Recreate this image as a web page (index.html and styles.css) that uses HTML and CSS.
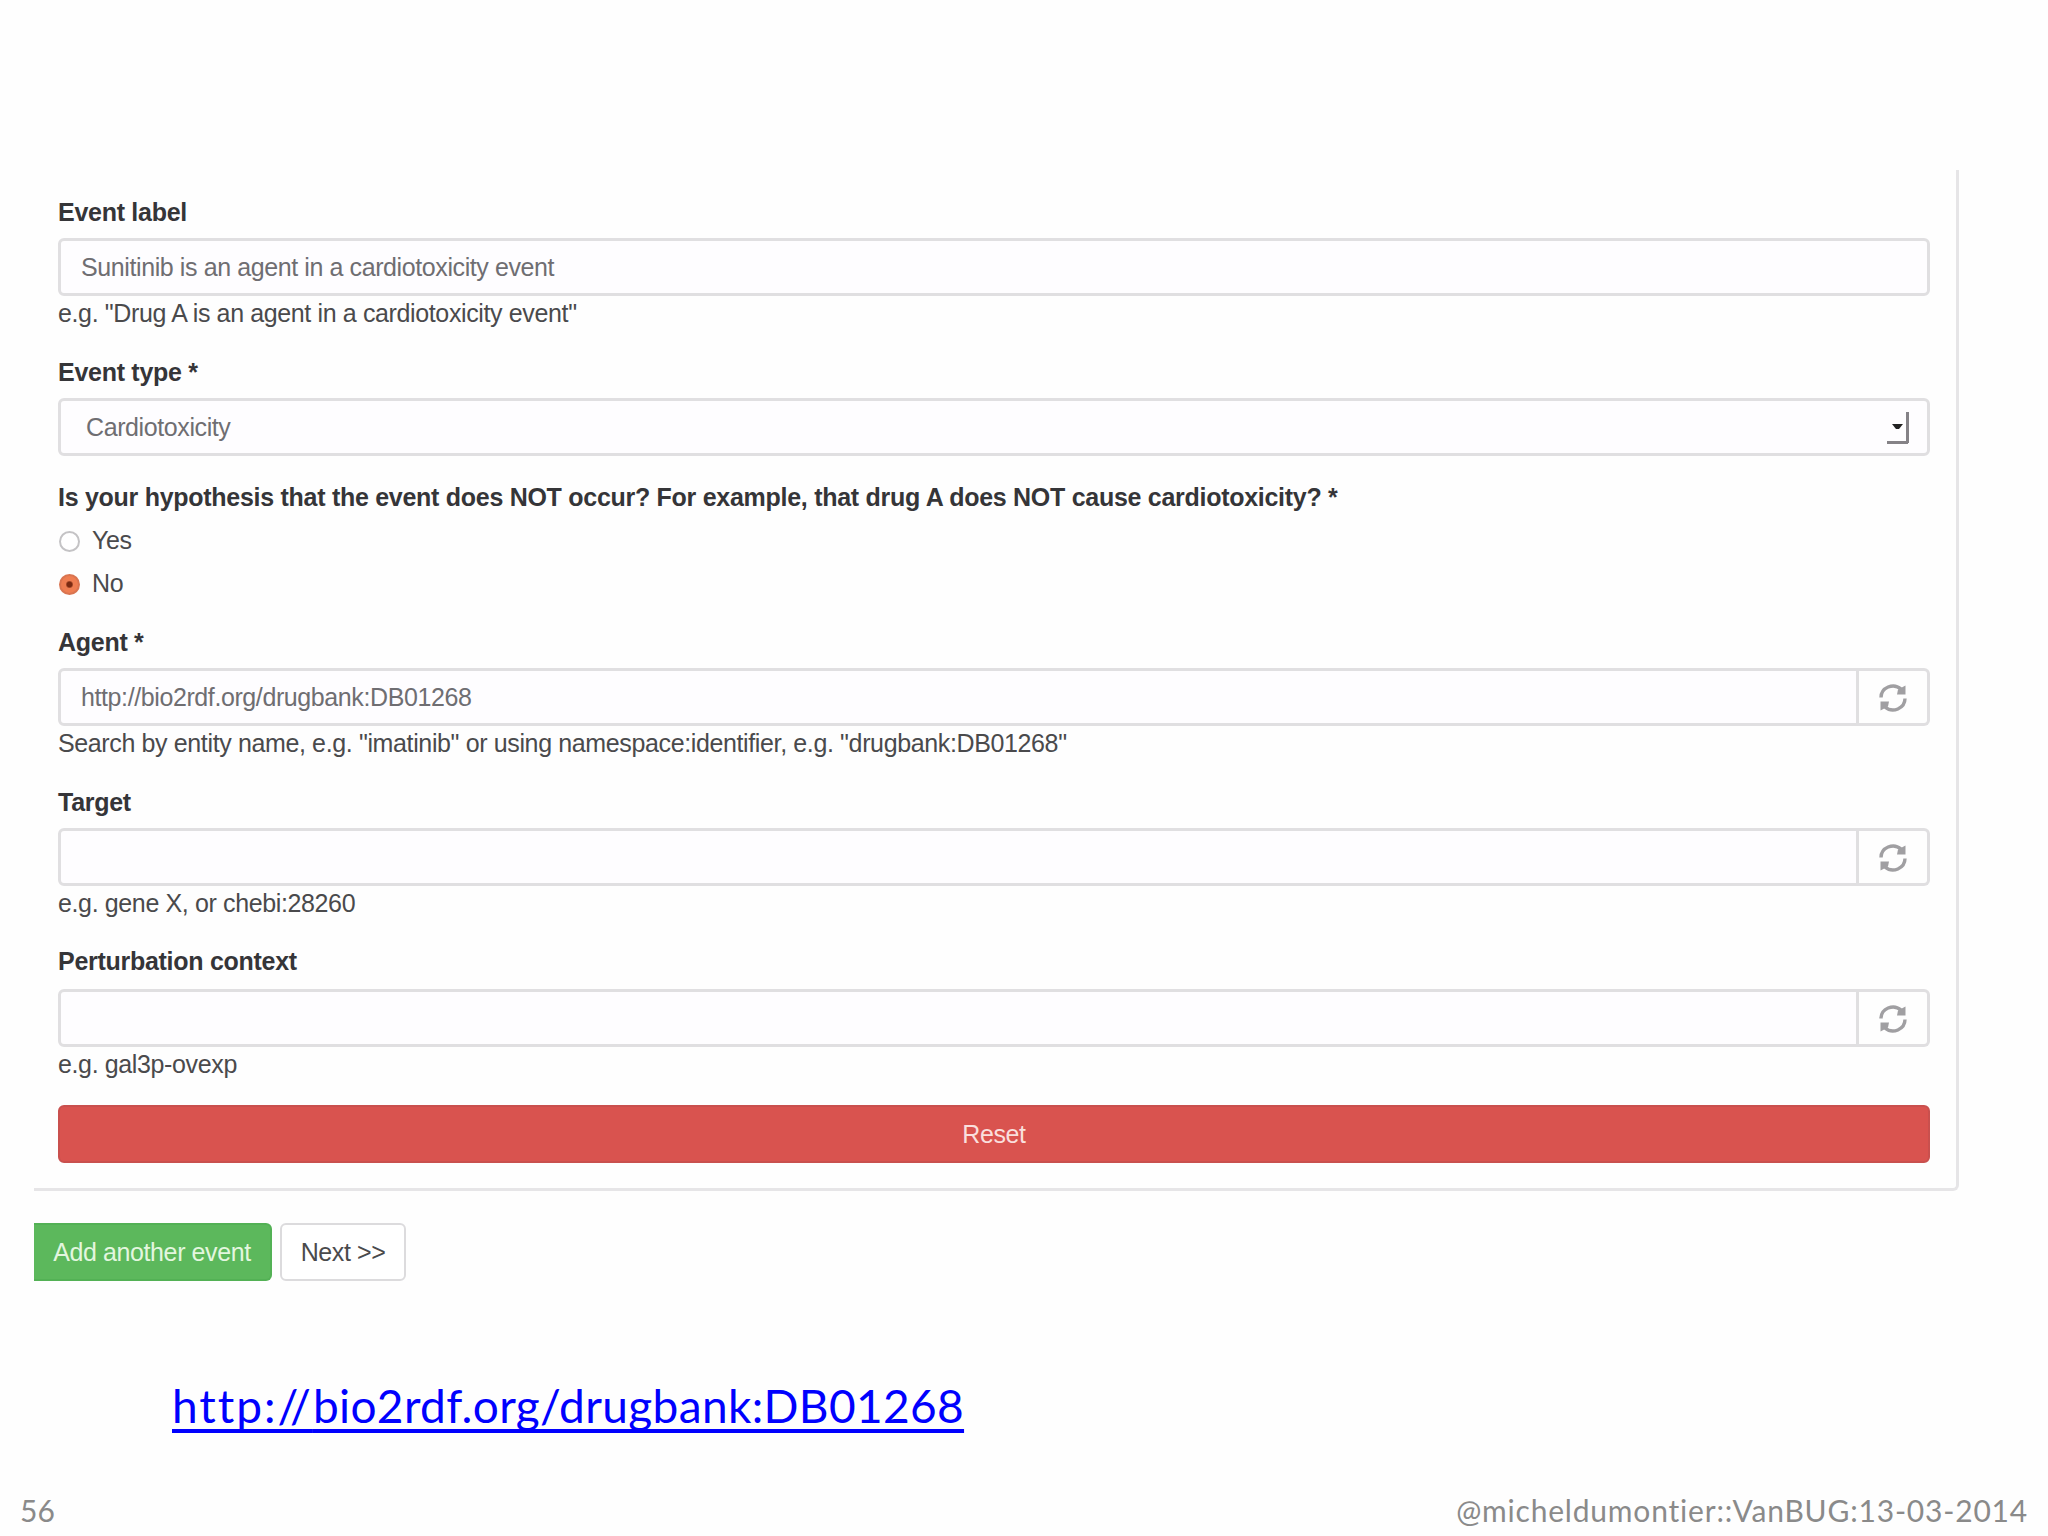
FILE: index.html
```html
<!DOCTYPE html>
<html lang="en">
<head>
  <meta charset="UTF-8" />
  <meta name="viewport" content="width=device-width, initial-scale=1.0"/>
  <title>Event form</title>
  <link rel="stylesheet" href="styles.css">
</head>
<body>

<svg class="defs" width="0" height="0">
  <symbol id="refresh" viewBox="0 0 28 28">
    <path d="M2 13.500A12 11.500 0 0 1 22 5M26 14.500A12 11.500 0 0 1 6 23" fill="none" stroke="currentColor" stroke-width="3.400"/>
    <path d="M26.500 1.500v9h-8.500l1-5zM1.500 26.500v-9h8.500l-1 5z" fill="currentColor"/>
  </symbol>
</svg>

<main class="form">
  <section class="panel">
    <div class="field">
      <label for="label">Event label</label>
      <input type="text" id="label" value="Sunitinib is an agent in a cardiotoxicity event">
      <p class="help">e.g. "Drug A is an agent in a cardiotoxicity event"</p>
    </div>

    <div class="field">
      <label for="type">Event type *</label>
      <div class="select">
        <select id="type"><option>Cardiotoxicity</option></select>
        <svg class="arrow" width="24" height="36" viewBox="0 0 24 36">
          <path d="M6 14h11l-4 5h-3z" fill="#222"/>
          <path d="M1 32.500h21M21.500 2v31" fill="none" stroke="#858287" stroke-width="3"/>
        </svg>
      </div>
    </div>

    <div class="field choices">
      <div class="question">Is your hypothesis that the event does NOT occur? For example, that drug A does NOT cause cardiotoxicity? *</div>
      <label class="radio"><input type="radio" name="not"> Yes</label>
      <label class="radio"><input type="radio" name="not" checked> No</label>
    </div>

    <div class="field">
      <label for="agent">Agent *</label>
      <div class="group">
        <input type="text" id="agent" value="http://bio2rdf.org/drugbank:DB01268">
        <span class="addon"><svg><use href="#refresh"/></svg></span>
      </div>
      <p class="help">Search by entity name, e.g. "imatinib" or using namespace:identifier, e.g. "drugbank:DB01268"</p>
    </div>

    <div class="field">
      <label for="target">Target</label>
      <div class="group">
        <input type="text" id="target">
        <span class="addon"><svg><use href="#refresh"/></svg></span>
      </div>
      <p class="help">e.g. gene X, or chebi:28260</p>
    </div>

    <div class="field context">
      <label for="context">Perturbation context</label>
      <div class="group">
        <input type="text" id="context">
        <span class="addon"><svg><use href="#refresh"/></svg></span>
      </div>
      <p class="help">e.g. gal3p-ovexp</p>
    </div>

    <button class="reset">Reset</button>
  </section>

  <div class="actions">
    <button class="add">Add another event</button>
    <button class="next">Next &gt;&gt;</button>
  </div>
</main>

<a class="link" href="http://bio2rdf.org/drugbank:DB01268"><span class="scheme">http://</span>bio2rdf.org/drugbank:DB01268</a>

<footer>
  <span>56</span>
  <span class="handle">@micheldumontier::VanBUG:13-03-2014</span>
</footer>

</body>
</html>
```

FILE: styles.css
```css
* {
  box-sizing: border-box;
}
body {
  margin: 0;
  height: 1536px;
  padding-top: 170px;
  background: #fefefe;
  display: flex;
  flex-direction: column;
  overflow: hidden;
}
.defs {
  display: none;
}
.form,
.form input,
.form select,
.form button {
  font-family: "Liberation Sans", Arial, sans-serif;
  font-size: 25px;
  letter-spacing: -0.4px;
  color: #4a4a4c;
}
.form {
  margin-left: 34px;
}
.panel {
  width: 1925px;
  height: 1021px;
  padding: 25px 26px 0 24px;
  border: solid #e6e5e7;
  border-width: 0 3px 3px 0;
  border-bottom-right-radius: 6px;
}
.field {
  margin-bottom: 24.5px;
}
.field label,
.question {
  display: block;
  line-height: 34px;
  margin-bottom: 9px;
  font-weight: bold;
  letter-spacing: -0.28px;
  color: #353538;
}
.field input[type="text"],
.select select {
  display: block;
  width: 100%;
  height: 58px;
  padding: 0 20px;
  background: #fefdff;
  border: 3px solid #e0dfe1;
  border-radius: 6px;
  color: #6f6e72;
  outline: none;
}
.field .select select {
  padding-left: 25px;
}
.help {
  margin: 0;
  line-height: 34px;
  letter-spacing: -0.37px;
}
.select {
  position: relative;
}
.select select {
  appearance: none;
}
.arrow {
  position: absolute;
  right: 20px;
  top: 12px;
}
.choices {
  margin-bottom: 21px;
}
.choices .question {
  margin-bottom: 5px;
}
.choices .radio {
  display: flex;
  align-items: center;
  gap: 12px;
  height: 42.5px;
  margin: 0;
  font-weight: normal;
  letter-spacing: -0.4px;
  color: #4a4a4c;
}
.radio input {
  appearance: none;
  width: 21px;
  height: 21px;
  margin: 3px 0 0 1px;
  border: 2px solid #c4c3c5;
  border-radius: 50%;
  background: #fff;
}
.radio input:checked {
  border-color: #d97450;
  background: radial-gradient(circle, #7a2a12 0 2.5px, #ee7d51 4px);
}
.group {
  display: flex;
}
.field .group input {
  flex: 1;
  border-radius: 6px 0 0 6px;
}
.addon {
  width: 71px;
  display: flex;
  align-items: center;
  justify-content: center;
  padding-top: 2px;
  border: 3px solid #e0dfe1;
  border-left: 0;
  border-radius: 0 6px 6px 0;
  color: #a09fa2;
}
.addon svg {
  width: 28px;
  height: 28px;
}
.context label {
  margin-bottom: 10.5px;
}
.form button {
  height: 58px;
  padding: 0;
  border: 2px solid transparent;
  border-radius: 6px;
}
.form .reset {
  display: block;
  width: 100%;
  background: #d9534f;
  border-color: #c9504e;
  color: #fadfdd;
}
.actions {
  display: flex;
  gap: 8px;
  margin-top: 32px;
}
.form .add {
  width: 238px;
  background: #5cb85c;
  border-color: #53b155;
  border-left: 0;
  border-radius: 0 6px 6px 0;
  color: #e3f6df;
}
.form .next {
  width: 126px;
  background: #fff;
  border-color: #dcdbdd;
}
.link {
  align-self: flex-start;
  margin: 95px 0 0 172px;
  font: 46px/60px Lato, sans-serif;
  letter-spacing: 0.35px;
  color: #0000fe;
  text-underline-offset: 6px;
  text-decoration-thickness: 4px;
  text-decoration-skip-ink: none;
}
.scheme {
  letter-spacing: 2px;
}
footer {
  display: flex;
  justify-content: space-between;
  margin-top: 54px;
  padding: 0 20px;
  font: 30px/40px Lato, sans-serif;
  color: #8a8a8a;
}
.handle {
  letter-spacing: 0.8px;
}
```
